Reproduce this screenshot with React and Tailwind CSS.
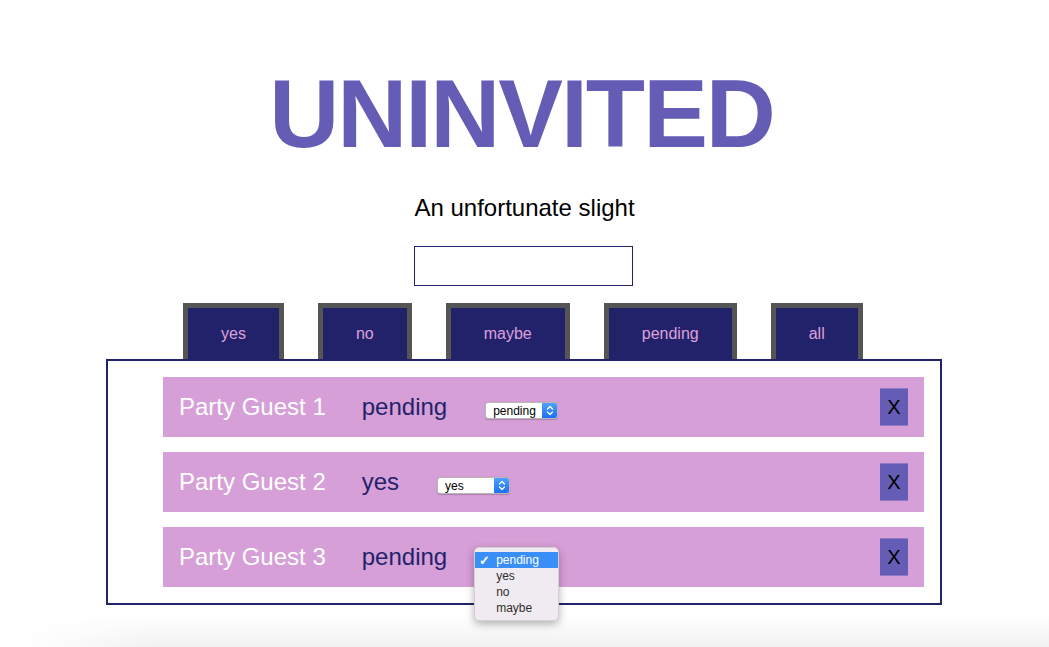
import React from "react";

function Chevrons() {
  return (
    <svg width="8" height="11" viewBox="0 0 8 11" fill="none">
      <path d="M1.5 4 L4 1.5 L6.5 4" stroke="white" strokeWidth="1.3" strokeLinecap="round" strokeLinejoin="round" />
      <path d="M1.5 7 L4 9.5 L6.5 7" stroke="white" strokeWidth="1.3" strokeLinecap="round" strokeLinejoin="round" />
    </svg>
  );
}

function FakeSelect({ value, open }) {
  return (
    <div className="relative ml-[38px] mt-[7px] shrink-0">
      <div className="flex h-[17px] w-[73px] items-stretch overflow-hidden rounded-[3px] border border-[#b8b8b8] bg-white shadow-[0_0.5px_1px_rgba(0,0,0,0.2)]">
        <div className="flex flex-1 items-center pl-[7px] text-[12px] leading-none text-black">{value}</div>
        <div className="flex w-[15px] items-center justify-center bg-gradient-to-b from-[#4fa0fb] to-[#1b6ff2]">
          <Chevrons />
        </div>
      </div>
      {open && (
        <div className="absolute left-[-11px] top-[-5px] z-10 w-[85px] rounded-[5px] border border-[#d4d0d4] bg-[#f0ebf0] py-[4px] shadow-[0_3px_8px_rgba(0,0,0,0.3)]">
          <div className="flex h-[16px] items-center bg-[#3a8ef7] text-[12px] leading-none text-white">
            <span className="w-[21px] pl-[4px] text-[13px] font-bold">✓</span>
            <span>pending</span>
          </div>
          {["yes", "no", "maybe"].map((o) => (
            <div key={o} className="flex h-[16px] items-center pl-[21px] text-[12px] leading-none text-[#2e2e2e]">
              {o}
            </div>
          ))}
        </div>
      )}
    </div>
  );
}

function Guest({ name, status, open }) {
  return (
    <li className="flex h-[60px] items-center bg-[#d69fd7] pl-[16px] pr-[16px]">
      <span className="shrink-0 whitespace-nowrap text-[24px] leading-none text-white">{name}</span>
      <span className="ml-[36px] shrink-0 whitespace-nowrap text-[24px] leading-none text-[#23236b]">{status}</span>
      <FakeSelect value={status} open={open} />
      <div className="ml-auto flex h-[38px] w-[28px] shrink-0 items-center justify-center border-y border-[#8f78c8] bg-[#655cb5] text-[20px] leading-none text-black">
        X
      </div>
    </li>
  );
}

export default function App() {
  const tabs = ["yes", "no", "maybe", "pending", "all"];
  return (
    <div className="relative h-[647px] w-[1049px] overflow-hidden bg-white font-['Liberation_Sans',Arial,sans-serif]">
      <h1 className="mt-[65px] h-[97px] pr-[6px] text-center text-[97px] font-bold leading-[97px] tracking-[-2px] text-[#655cb5]">
        UNINVITED
      </h1>
      <p className="mt-[34px] h-[24px] text-center text-[24px] leading-[24px] text-black">An unfortunate slight</p>
      <div className="mt-[26px] flex pl-[414px]">
        <div className="h-[40px] w-[219px] border border-[#23236b] bg-white" />
      </div>
      <div className="mt-[17px] flex gap-[34px] pl-[183px]">
        {tabs.map((t) => (
          <div
            key={t}
            className="h-[56px] border-[5px] border-b-0 border-[#555555] bg-[#22226a] px-[33px] pt-[16px] text-[16px] leading-[20px] text-[#dda0dd]"
          >
            {t}
          </div>
        ))}
      </div>
      <div className="ml-[106px] w-[836px] border-2 border-[#23236b] px-[16px] py-[16px]">
        <ul className="flex flex-col gap-[15px] pl-[39px]">
          <Guest name="Party Guest 1" status="pending" />
          <Guest name="Party Guest 2" status="yes" />
          <Guest name="Party Guest 3" status="pending" open />
        </ul>
      </div>
      <div className="mt-[10px] h-[32px] bg-[linear-gradient(to_right,#ffffff_20px,rgba(255,255,255,0)_160px),linear-gradient(to_bottom,#ffffff,#f1f1f1)]" />
    </div>
  );
}
